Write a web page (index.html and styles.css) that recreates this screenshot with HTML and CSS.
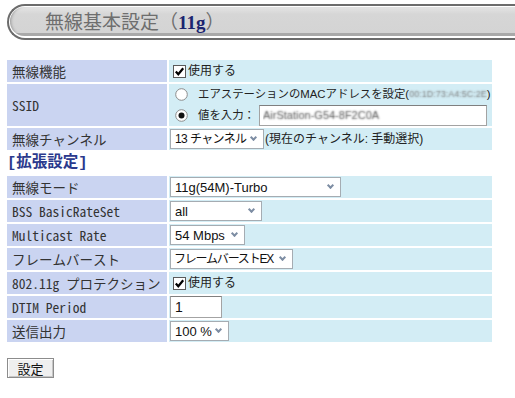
FILE: index.html
```html
<!DOCTYPE html>
<html lang="ja">
  <head>
    <meta charset="UTF-8" />
    <meta name="viewport" content="width=device-width, initial-scale=1.0" />
    <title>無線基本設定（11g）</title>
    <link rel="stylesheet" href="styles.css">
  </head>
  <body>
    <div class="page">
      <div class="title-bar">
        <div class="title-fill">
          <h1 class="title">無線基本設定<span class="paren">（<b class="band">11g</b>）</span></h1>
        </div>
      </div>

      <table class="form">
        <tr>
          <th>無線機能</th>
          <td>
            <label class="chk">
              <svg class="box" width="13" height="13" viewBox="0 0 13 13"><rect x="0.5" y="0.5" width="12" height="12" fill="#fff" stroke="#5a5a5a"/><path d="M2.8 6.4 L5.3 9.2 L10.2 3.2" fill="none" stroke="#000" stroke-width="2.2"/></svg>使用する
            </label>
          </td>
        </tr>
        <tr>
          <th>SSID</th>
          <td>
            <div class="radio-line">
              <svg class="radio" width="13" height="13" viewBox="0 0 13 13"><circle cx="6.5" cy="6.5" r="5.8" fill="#fff" stroke="#8c8c8c"/></svg>エアステーションのMACアドレスを設定(<span class="masked">00:1D:73:A4:5C:2E</span>)
            </div>
            <div class="radio-line">
              <svg class="radio" width="13" height="13" viewBox="0 0 13 13"><circle cx="6.5" cy="6.5" r="5.8" fill="#fff" stroke="#8c8c8c"/><circle cx="6.5" cy="6.5" r="3" fill="#111"/></svg>値を入力：<input class="ssid" type="text" value="AirStation-G54-8F2C0A">
            </div>
          </td>
        </tr>
        <tr>
          <th>無線チャンネル</th>
          <td>
            <span class="sel"><select class="w-channel jp"><option>13 チャンネル</option></select></span><span class="note">(現在のチャンネル: 手動選択)</span>
          </td>
        </tr>
      </table>

      <h2 class="section">[拡張設定]</h2>

      <table class="form">
        <tr>
          <th>無線モード</th>
          <td><span class="sel"><select class="w-mode"><option>11g(54M)-Turbo</option></select></span></td>
        </tr>
        <tr>
          <th>BSS BasicRateSet</th>
          <td><span class="sel"><select class="w-bss"><option>all</option></select></span></td>
        </tr>
        <tr>
          <th>Multicast Rate</th>
          <td><span class="sel"><select class="w-mcast"><option>54 Mbps</option></select></span></td>
        </tr>
        <tr>
          <th>フレームバースト</th>
          <td><span class="sel"><select class="w-burst jp"><option>フレームバーストEX</option></select></span></td>
        </tr>
        <tr>
          <th>802.11g プロテクション</th>
          <td>
            <label class="chk">
              <svg class="box" width="13" height="13" viewBox="0 0 13 13"><rect x="0.5" y="0.5" width="12" height="12" fill="#fff" stroke="#5a5a5a"/><path d="M2.8 6.4 L5.3 9.2 L10.2 3.2" fill="none" stroke="#000" stroke-width="2.2"/></svg>使用する
            </label>
          </td>
        </tr>
        <tr>
          <th>DTIM Period</th>
          <td><input class="dtim" type="text" value="1"></td>
        </tr>
        <tr>
          <th>送信出力</th>
          <td><span class="sel"><select class="w-power"><option>100 %</option></select></span></td>
        </tr>
      </table>

      <div class="actions">
        <button class="submit" type="button">設定</button>
      </div>
    </div>
  </body>
</html>
```

FILE: styles.css
```css
body {
  margin: 0;
  font-family: "Noto Sans CJK JP", sans-serif;
  color: #222;
  background: #fff;
}
.page {
  padding: 4px 0 0 5px;
}

/* title bar */
.title-bar {
  margin-left: 2px;
  height: 36px;
  box-sizing: border-box;
  border: 2px solid #6c6c6c;
  border-right: 0;
  border-radius: 18px 0 0 18px;
  padding: 1px 0 2px 1px;
}
.title-fill {
  height: 100%;
  box-sizing: border-box;
  border-radius: 16px 0 0 16px;
  background: linear-gradient(#e4e4e4, #d6d6d6 25%, #d4d4d4 88%, #a9a9a9 89%, #a9a9a9);
  box-shadow: inset 3px 0 3px -2px #9a9a9a;
  padding-left: 35px;
  display: flex;
  align-items: center;
}
.title {
  margin: 0;
  font-size: 19px;
  font-weight: normal;
  color: #6e6e6e;
  line-height: 24px;
  white-space: nowrap;
}
.band {
  font-family: "Liberation Serif", serif;
  font-size: 19px;
  font-weight: bold;
  color: #1b2470;
}

/* form tables */
.form {
  border-collapse: separate;
  border-spacing: 2px;
  width: 489px;
  table-layout: fixed;
}
.title-bar + .form {
  margin-top: 18px;
}
.form th {
  width: 155px;
  height: 22px;
  padding: 0 0 0 5px;
  background: #cad4f1;
  font-family: "Noto Sans Mono CJK JP", "Noto Sans CJK JP", monospace;
  font-size: 13.5px;
  font-weight: normal;
  color: #333;
  text-align: left;
  white-space: nowrap;
  line-height: 18px;
}
.form td {
  height: 22px;
  padding: 0 0 0 1px;
  background: #d3edf5;
  font-family: "Liberation Sans", "Noto Sans CJK JP", sans-serif;
  font-size: 12px;
  line-height: 18px;
  color: #222;
  white-space: nowrap;
}

.chk {
  display: flex;
  align-items: center;
}
.box {
  margin: 0 2px 0 3px;
}
.radio-line {
  display: flex;
  align-items: center;
  height: 20px;
  font-size: 11.4px;
}
.radio-line + .radio-line {
  height: 22px;
}
.radio {
  margin: 0 10px 0 5px;
  flex: none;
}
.masked {
  font-size: 9px;
  color: transparent;
  text-shadow: 0 0 2px #777;
}
.ssid {
  width: 228px;
  height: 21px;
  box-sizing: border-box;
  margin-left: 4px;
  border: 1px solid #a3a3a3;
  border-top-color: #7f7f7f;
  padding: 0 3px;
  font-family: "Liberation Sans", sans-serif;
  font-size: 11px;
  color: transparent;
  text-shadow: 0 0 2px #555;
}

/* selects */
.sel {
  position: relative;
  display: inline-block;
  vertical-align: middle;
}
.sel::after {
  content: "";
  position: absolute;
  right: 8px;
  top: 6px;
  width: 3px;
  height: 3px;
  border-right: 2px solid #7d8da3;
  border-bottom: 2px solid #7d8da3;
  transform: rotate(45deg);
  pointer-events: none;
}
select {
  display: block;
  appearance: none;
  height: 20px;
  margin: 0;
  padding: 0 0 0 4px;
  border: 1px solid #a5acb2;
  border-radius: 0;
  background: #fff;
  font-family: "Liberation Sans", "Noto Sans CJK JP", sans-serif;
  font-size: 13px;
  color: #111;
}
select.jp {
  font-size: 12px;
  letter-spacing: -0.6px;
}
.w-channel { width: 94px; }
.w-mode { width: 171px; }
.w-bss { width: 92px; }
.w-mcast { width: 75px; }
.w-burst { width: 123px; }
select.w-burst {
  padding-left: 3px;
  letter-spacing: -1.2px;
}
.w-power { width: 59px; }
.note {
  vertical-align: middle;
  margin-left: 1px;
}
.dtim {
  display: block;
  width: 52px;
  height: 22px;
  box-sizing: border-box;
  border: 1px solid #a3a3a3;
  border-top-color: #808080;
  padding: 0 4px;
  font-family: "Liberation Sans", sans-serif;
  font-size: 14px;
  color: #111;
}

.section {
  margin: 0;
  padding-left: 2px;
  height: 22px;
  line-height: 22px;
  font-family: "Liberation Mono", "Noto Sans CJK JP", monospace;
  font-size: 15.5px;
  font-weight: bold;
  color: #2b3a8d;
}

.actions {
  margin-top: 14px;
}
.submit {
  display: block;
  margin-left: 2px;
  width: 47px;
  height: 20px;
  padding: 0;
  border: 1px solid #8c8c8c;
  border-radius: 0;
  background: #efefef;
  box-shadow: inset 1px 1px #fff, inset -1px -1px #c6c6c6;
  font-family: "Noto Sans CJK JP", sans-serif;
  font-size: 13px;
  color: #111;
}
```
